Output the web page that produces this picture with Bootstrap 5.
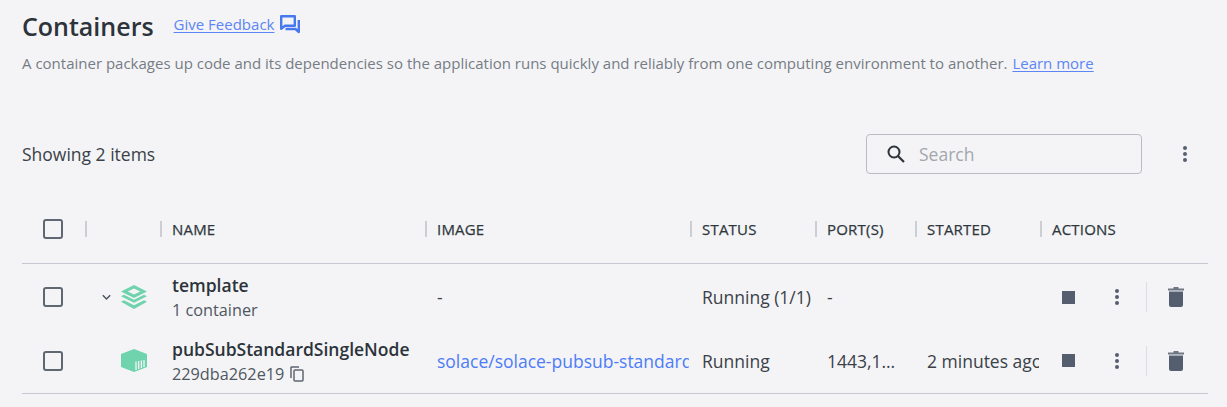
<!DOCTYPE html>
<html lang="en">
<head>
<meta charset="utf-8">
<title>Containers</title>
<link href="https://cdn.jsdelivr.net/npm/bootstrap@5.3.0/dist/css/bootstrap.min.css" rel="stylesheet">
<style>
html,body{height:407px;overflow:hidden}
body{background:#f4f4f6;font-family:"Open Sans",sans-serif;color:#2c3339;font-size:17.5px}
.pg{padding:0 19px 0 22px}
.hdg{height:51px}
.hdg h1{font-size:25px;font-weight:600;line-height:48px;margin:0;color:#2c333a}
.fb{font-size:15px;color:#5c85f5;margin:0 0 2px 20px;text-decoration-thickness:1px;text-underline-offset:2px}
.fbi{margin:0 0 2px 6px}
.dsc{font-size:15px;line-height:24px;color:#767c85;margin:0;height:24px}
.dsc a{color:#5c85f5;text-underline-offset:2px;margin-left:1px}
.bar{height:60px;margin-top:49px}
.cnt{font-size:17.5px;color:#3a4148}
.srch{width:276px;height:40px;border:1px solid #b9bcc2;border-radius:4px;padding-left:19px;gap:13px;margin-right:40px}
.srch input{border:0;background:transparent;outline:0;font:17.500px "Open Sans",sans-serif;width:200px;padding:0}
.srch input::placeholder{color:#a3a7ad;opacity:1}
.kebtop{margin-right:20px}
.tbl{width:1186px;table-layout:fixed;border-collapse:collapse;margin-top:10px}
.tbl th{height:69px;font-size:15px;font-weight:500;color:#2f373d;padding:2px 0 0 12px;border-bottom:1px solid #c8c8d2;vertical-align:middle;position:relative;white-space:nowrap;letter-spacing:.2px;-webkit-text-stroke:.25px #2f373d}
.tbl th.sp::before{content:"";position:absolute;left:0;top:27px;height:16px;width:2px;background:#ccced4}
.tbl td{height:64px;padding:0 0 0 12px;font-size:17.5px;color:#3a4148;white-space:nowrap;overflow:hidden;vertical-align:middle;line-height:24px}
.tbl tr.lastrow td{border-bottom:1px solid #c8c8d2}
.tbl tr.firstrow td{height:66px;padding-top:2px}
.tbl td.nop,.tbl th.nop{padding-left:0}
.ck{width:20px;height:20px;border:2.5px solid #5f6773;border-radius:3px;margin-left:21px;display:block}
.nm{font-weight:600;color:#2c333a;line-height:24px}
.lastrow .nm{margin-top:2px}
.sb{font-size:16.250px;color:#4f575f;line-height:24px;display:flex;align-items:center;gap:6px;margin-top:1px}
.lnk{color:#4d7cf6;text-decoration:none}
.clp{display:block;overflow:hidden;margin-right:1px}
.tbl td.ell{text-overflow:ellipsis;padding-right:17px}
.acts{display:flex;align-items:center;padding-left:22px}
.kebrow{margin-left:39px}
.vr1{width:1px;height:30px;background:#dcdde1;margin-left:26px;margin-right:21px}
.gico{display:flex;align-items:center;padding-left:17px}
.chv{margin-right:10px}
.gspc{width:19px;flex:none}
</style>
</head>
<body>
<div class="pg">
  <div class="hdg d-flex align-items-center">
    <h1>Containers</h1>
    <a href="#" class="fb">Give Feedback</a>
    <svg class="fbi" width="20" height="19" viewBox="0 0 20 19" fill="none"><path d="M1.200 1.200h13.600v9.600H5L1.200 13.800z" stroke="#4878f0" stroke-width="2.400" stroke-linejoin="round"/><path d="M5.500 14H15.500l3.300 3V5" stroke="#4878f0" stroke-width="2.400" stroke-linejoin="round"/></svg>
  </div>
  <p class="dsc">A container packages up code and its dependencies so the application runs quickly and reliably from one computing environment to another. <a href="#">Learn more</a></p>
  <div class="bar d-flex align-items-center justify-content-between">
    <span class="cnt">Showing 2 items</span>
    <div class="d-flex align-items-center">
      <label class="srch d-flex align-items-center mb-0">
        <svg width="20" height="20" viewBox="0 0 20 20" fill="none"><circle cx="8" cy="8" r="5.500" stroke="#2c333a" stroke-width="2"/><path d="M12 12l6 6" stroke="#2c333a" stroke-width="2.200"/></svg>
        <input type="text" placeholder="Search">
      </label>
      <svg class="kebtop" width="6" height="18" viewBox="0 0 6 18" fill="#56606e"><circle cx="3" cy="3" r="2"/><circle cx="3" cy="9" r="2"/><circle cx="3" cy="15" r="2"/></svg>
    </div>
  </div>
  <table class="tbl">
    <colgroup><col style="width:63px"><col style="width:75px"><col style="width:265px"><col style="width:265px"><col style="width:125px"><col style="width:100px"><col style="width:125px"><col style="width:168px"></colgroup>
    <thead>
      <tr>
        <th class="nop"><span class="ck"></span></th>
        <th class="sp"></th>
        <th class="sp">NAME</th>
        <th class="sp">IMAGE</th>
        <th class="sp">STATUS</th>
        <th class="sp">PORT(S)</th>
        <th class="sp">STARTED</th>
        <th class="sp">ACTIONS</th>
      </tr>
    </thead>
    <tbody>
      <tr class="firstrow">
        <td class="nop"><span class="ck"></span></td>
        <td class="nop">
          <div class="gico">
            <svg class="chv" width="9" height="7" viewBox="0 0 9 7" fill="none"><path d="M.8 1.200L4.500 5l3.700-3.800" stroke="#4c5563" stroke-width="1.500"/></svg>
            <svg width="26" height="24" viewBox="0 0 26 24"><path d="M13 0L26 6.500 13 13 0 6.500zM13 3.400L6.800 6.500 13 9.600 19.200 6.500z" fill="#6fd3ad" fill-rule="evenodd"/><path d="M0 11.200l3-1.500 10 5 10-5 3 1.500-13 6.500z" fill="#6fd3ad"/><path d="M0 16.800l3-1.500 10 5 10-5 3 1.500L13 24z" fill="#6fd3ad"/></svg>
          </div>
        </td>
        <td><div class="nm">template</div><div class="sb">1 container</div></td>
        <td>-</td>
        <td>Running (1/1)</td>
        <td>-</td>
        <td></td>
        <td class="nop">
          <div class="acts"><svg width="13" height="13" viewBox="0 0 13 13"><rect width="13" height="13" fill="#555e6e"/></svg><svg class="kebrow" width="6" height="18" viewBox="0 0 6 18" fill="#555e6e"><circle cx="3" cy="3" r="2"/><circle cx="3" cy="9" r="2"/><circle cx="3" cy="15" r="2"/></svg><span class="vr1"></span><svg width="16" height="20" viewBox="0 0 16 20"><path d="M5.500 0h5v1.500H16v2H0v-2h5.500z" fill="#6e7684"/><path d="M1 4.500h14V18a2 2 0 0 1-2 2H3a2 2 0 0 1-2-2z" fill="#555e6e"/></svg></div>
        </td>
      </tr>
      <tr class="lastrow">
        <td class="nop"><span class="ck"></span></td>
        <td class="nop">
          <div class="gico"><span class="gspc"></span>
            <svg width="26" height="23" viewBox="0 0 26 23"><path d="M13 0L26 5v13l-13 5L0 18V5z" fill="#6fd3ad"/><path d="M15 12.500v8.500M17.700 12v8M20.400 11.500v7.500M23 11v7" stroke="#f4f4f6" stroke-width="1.300"/></svg>
          </div>
        </td>
        <td><div class="nm">pubSubStandardSingleNode</div><div class="sb">229dba262e19<svg width="14" height="16" viewBox="0 0 14 16" fill="none"><path d="M1 12V1.500a.5.5 0 0 1 .5-.5H9" stroke="#5f6773" stroke-width="1.500"/><rect x="4" y="4" width="9" height="11" rx="1" stroke="#5f6773" stroke-width="1.500"/></svg></div></td>
        <td><span class="lnk clp">solace/solace-pubsub-standard:latest</span></td>
        <td>Running</td>
        <td class="ell">1443,1883,8008</td>
        <td><span class="clp">2 minutes ago</span></td>
        <td class="nop">
          <div class="acts"><svg width="13" height="13" viewBox="0 0 13 13"><rect width="13" height="13" fill="#555e6e"/></svg><svg class="kebrow" width="6" height="18" viewBox="0 0 6 18" fill="#555e6e"><circle cx="3" cy="3" r="2"/><circle cx="3" cy="9" r="2"/><circle cx="3" cy="15" r="2"/></svg><span class="vr1"></span><svg width="16" height="20" viewBox="0 0 16 20"><path d="M5.500 0h5v1.500H16v2H0v-2h5.500z" fill="#6e7684"/><path d="M1 4.500h14V18a2 2 0 0 1-2 2H3a2 2 0 0 1-2-2z" fill="#555e6e"/></svg></div>
        </td>
      </tr>
    </tbody>
  </table>
</div>
<script src="https://cdn.jsdelivr.net/npm/bootstrap@5.3.0/dist/js/bootstrap.bundle.min.js"></script>
</body>
</html>
